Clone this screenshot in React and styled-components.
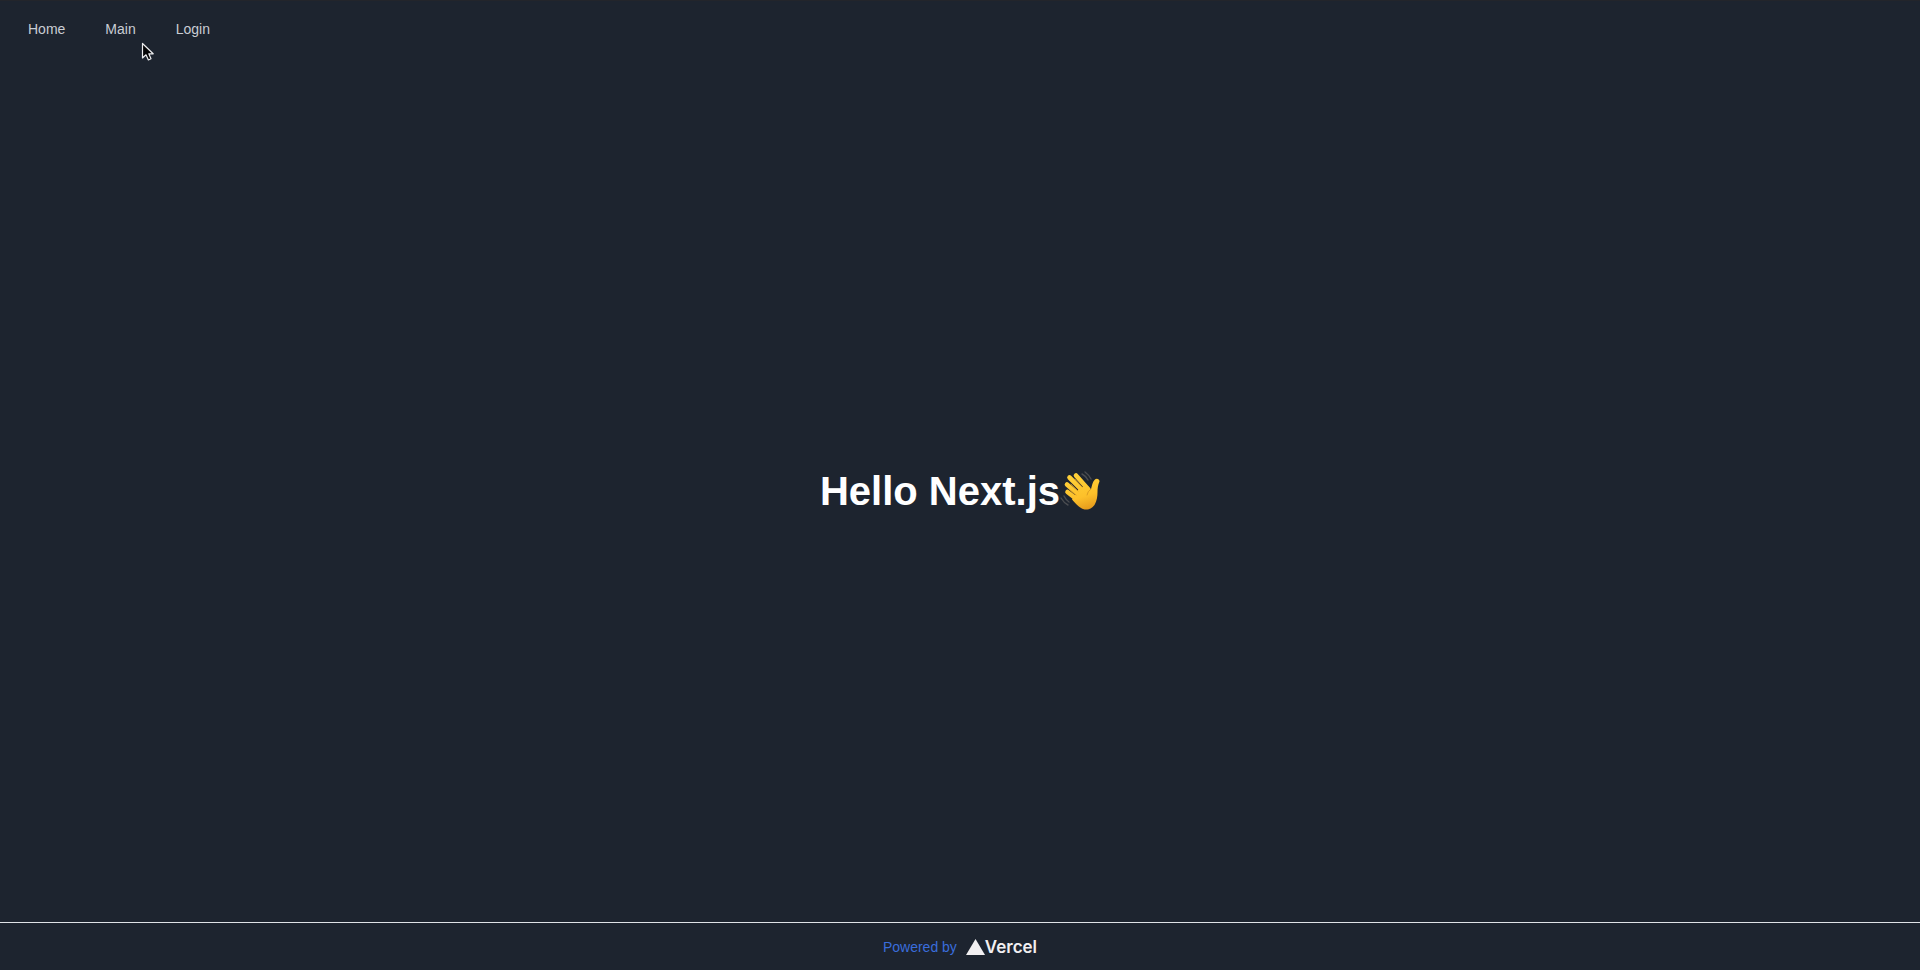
import React from "react";
import styled, { createGlobalStyle } from "styled-components";

const GlobalStyle = createGlobalStyle`
  *, *::before, *::after { box-sizing: border-box; }
  body {
    margin: 0;
    background: #1d242f;
    color: #ffffff;
    font-family: "Liberation Sans", Helvetica, Arial, sans-serif;
  }
`;

const Page = styled.div`
  display: flex;
  flex-direction: column;
  min-height: 100vh;
  border-top: 1px solid #23252b;
`;

const Nav = styled.nav`
  display: flex;
  gap: 40px;
  padding: 18px 28px;
`;

const NavLink = styled.a`
  color: #c9cdd4;
  font-size: 14px;
  line-height: 20px;
  text-decoration: none;
`;

const Main = styled.main`
  flex: 1;
  display: flex;
  align-items: center;
  justify-content: center;
  padding-top: 2px;
`;

const Title = styled.h1`
  display: flex;
  align-items: center;
  margin: 0;
  font-size: 40px;
  line-height: 48px;
`;

const WaveIcon = styled.svg`
  width: 40px;
  height: 40px;
`;

const Footer = styled.footer`
  display: flex;
  justify-content: center;
  padding: 14px 0 13px;
  border-top: 1px solid #dfe3e7;
`;

const FooterLink = styled.a`
  display: flex;
  align-items: center;
  gap: 9px;
  color: #3a6ddb;
  font-size: 14px;
  line-height: 20px;
  text-decoration: none;
`;

const Brand = styled.span`
  display: flex;
  align-items: center;
  color: #f1eff1;
  font-family: Inter, "Liberation Sans", sans-serif;
  font-size: 17px;
  font-weight: 600;
`;

const Triangle = styled.svg`
  width: 19px;
  height: 16px;
`;

const Pointer = styled.svg`
  position: absolute;
  top: 42px;
  left: 141px;
  width: 14px;
  height: 20px;
  pointer-events: none;
`;

const links = ["Home", "Main", "Login"];

function WavingHand() {
  return (
    <WaveIcon viewBox="0 0 40 40" role="img" aria-label="waving hand">
      <defs>
        <linearGradient
          id="skin"
          gradientUnits="userSpaceOnUse"
          x1="14"
          y1="2"
          x2="26"
          y2="39"
        >
          <stop offset="0" stopColor="#ffd23a" />
          <stop offset="0.65" stopColor="#fdc02a" />
          <stop offset="1" stopColor="#e59a1c" />
        </linearGradient>
      </defs>
      <g fill="none" stroke="#4a4c50" strokeWidth="1.4" strokeLinecap="round">
        <path d="M22 3Q26 5 28 9M25 1Q29 4 31 8M1 27Q4 32 8 34M4 25Q6 29 9 31" />
      </g>
      <g fill="none" stroke="url(#skin)" strokeWidth="4.6" strokeLinecap="round">
        <path d="M16 4.5L28 18" />
        <path d="M9.5 6.5L23 20" />
        <path d="M7 13.5L20 25" />
        <path d="M7.500 21L19 30" />
      </g>
      <path
        d="M20 16L28 15.5L31 18C32 14.5 32.5 11 34.5 9C36 7 39.5 7.5 39.5 10.5C38 14 37.5 17 37.5 21C37.5 25 37 30 34.5 34C31.5 38 27 39.5 23 38C20 37 17 34 12 28.5L16 22Z"
        fill="url(#skin)"
      />
      <g fill="none" stroke="#d2921f" strokeWidth="0.8" strokeLinecap="round">
        <path d="M15 8L22 16M11 13L18 20M10 19L16 24M31 18Q27.5 20 27 24" />
      </g>
    </WaveIcon>
  );
}

export default function App() {
  return (
    <>
      <GlobalStyle />
      <Page>
        <Nav>
          {links.map((label) => (
            <NavLink key={label} href="#">{label}</NavLink>
          ))}
        </Nav>
        <Main>
          <Title>
            Hello Next.js
            <WavingHand />
          </Title>
        </Main>
        <Footer>
          <FooterLink href="#">
            Powered by
            <Brand>
              <Triangle viewBox="0 0 19 16" aria-hidden="true">
                <path d="M9.5 0L19 16H0Z" fill="#f1eff1" />
              </Triangle>
              Vercel
            </Brand>
          </FooterLink>
        </Footer>
        <Pointer viewBox="0 0 14 20" aria-hidden="true">
          <path
            d="M1.5 1.5V16L5 12.8L7.4 18L10 16.8L7.8 11.8H12.2Z"
            fill="#050506"
            stroke="#ececee"
            strokeWidth="1.2"
            strokeLinejoin="round"
          />
        </Pointer>
      </Page>
    </>
  );
}
